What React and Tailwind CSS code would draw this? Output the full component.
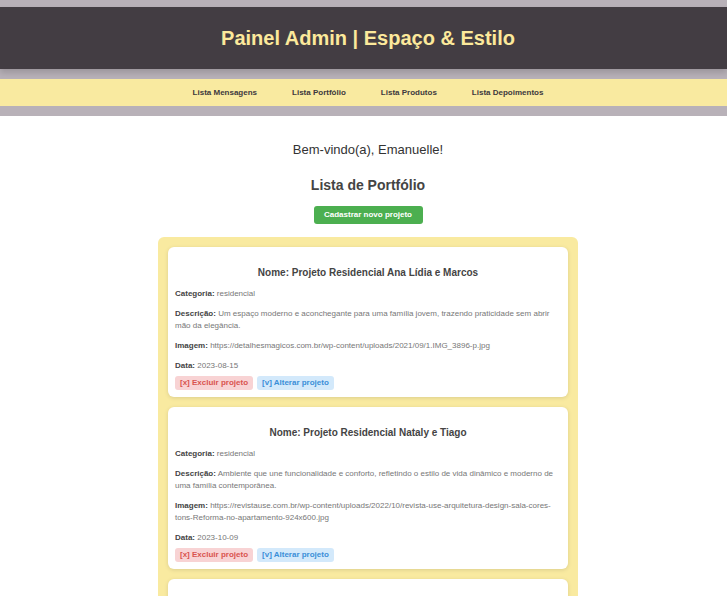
const projetos = [
  {
    nome: "Projeto Residencial Ana Lídia e Marcos",
    categoria: "residencial",
    descricao:
      "Um espaço moderno e aconchegante para uma família jovem, trazendo praticidade sem abrir mão da elegância.",
    imagem:
      "https://detalhesmagicos.com.br/wp-content/uploads/2021/09/1.IMG_3896-p.jpg",
    data: "2023-08-15",
  },
  {
    nome: "Projeto Residencial Nataly e Tiago",
    categoria: "residencial",
    descricao:
      "Ambiente que une funcionalidade e conforto, refletindo o estilo de vida dinâmico e moderno de uma família contemporânea.",
    imagem:
      "https://revistause.com.br/wp-content/uploads/2022/10/revista-use-arquitetura-design-sala-cores-tons-Reforma-no-apartamento-924x600.jpg",
    data: "2023-10-09",
  },
  {
    nome: "Projeto Comercial Loja Bella",
    categoria: "comercial",
    descricao: "Loja com iluminação natural e acabamentos em madeira clara.",
    imagem: "https://example.com/loja-bella.jpg",
    data: "2023-11-20",
  },
];

function Campo({ label, children }) {
  return (
    <p className="text-[8px] leading-[12px] text-[#777]">
      <span className="font-bold text-[#444]">{label}:</span> {children}
    </p>
  );
}

function CardProjeto({ p }) {
  return (
    <div className="bg-white rounded-md shadow-[0_1px_4px_rgba(0,0,0,0.12)] px-[7px] pt-[19px] pb-[7px]">
      <h3 className="text-center text-[10px] leading-[14px] font-bold text-[#444] mb-[8px]">
        Nome: {p.nome}
      </h3>
      <div className="flex flex-col gap-[8px]">
        <Campo label="Categoria">{p.categoria}</Campo>
        <Campo label="Descrição">{p.descricao}</Campo>
        <Campo label="Imagem">{p.imagem}</Campo>
        <Campo label="Data">{p.data}</Campo>
      </div>
      <div className="flex gap-[4px] mt-[4px]">
        <button className="bg-[#f8d3d4] text-[#d9534f] text-[8px] font-bold px-[5px] h-[14px] rounded-[3px]">
          [x] Excluir projeto
        </button>
        <button className="bg-[#d3e9fb] text-[#3b8ed8] text-[8px] font-bold px-[5px] h-[14px] rounded-[3px]">
          [v] Alterar projeto
        </button>
      </div>
    </div>
  );
}

export default function App() {
  return (
    <div className="min-h-screen bg-white font-['Liberation_Sans',Arial,sans-serif]">
      <div className="bg-[#b8b1b8] pt-[7px] pb-[10px]">
        <header className="bg-[#433d43] h-[62px] pl-[9px] flex items-center justify-center shadow-[0_4px_6px_rgba(0,0,0,0.15)]">
          <h1 className="text-[#fce99b] text-[20px] font-bold">
            Painel Admin | Espaço &amp; Estilo
          </h1>
        </header>
        <nav className="bg-[#f9eaa0] h-[27px] mt-[10px] pl-[9px] flex items-center justify-center gap-[35px]">
          {["Lista Mensagens", "Lista Portfólio", "Lista Produtos", "Lista Depoimentos"].map(
            (item) => (
              <a key={item} className="text-[8px] font-bold text-[#3d393d]">
                {item}
              </a>
            )
          )}
        </nav>
      </div>

      <main className="flex flex-col items-center pt-[26px] pl-[9px]">
        <h2 className="text-[13px] leading-[16px] text-[#333]">Bem-vindo(a), Emanuelle!</h2>
        <h2 className="text-[14px] leading-[18px] font-bold text-[#444] mt-[18px]">
          Lista de Portfólio
        </h2>
        <button className="bg-[#4caf50] text-white text-[8px] font-bold w-[109px] h-[18px] rounded-[3px] mt-[12px]">
          Cadastrar novo projeto
        </button>
        <div className="w-[420px] bg-[#f9eaa0] rounded-md p-[10px] mt-[13px] flex flex-col gap-[10px]">
          {projetos.map((p) => (
            <CardProjeto key={p.nome} p={p} />
          ))}
        </div>
      </main>
    </div>
  );
}
